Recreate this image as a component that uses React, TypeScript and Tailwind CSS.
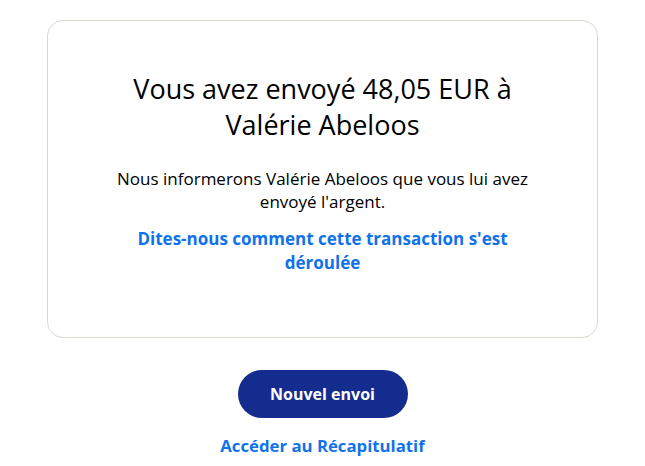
import React from "react";

export default function App() {
  return (
    <div
      className="w-[645px] h-[466px] bg-white flex flex-col items-center"
      style={{ fontFamily: "'Open Sans', sans-serif" }}
    >
      <div className="mt-[20px] w-[551px] h-[318px] border border-[#dcd9cf] rounded-[16px] flex flex-col items-center pt-[50px]">
        <h1 className="text-[27px] leading-[36px] text-black text-center max-w-[420px]">
          Vous avez envoyé 48,05 EUR à Valérie Abeloos
        </h1>
        <p className="mt-[24px] text-[17px] leading-[23px] text-black text-center max-w-[440px]">
          Nous informerons Valérie Abeloos que vous lui avez envoyé l'argent.
        </p>
        <a className="mt-[14px] text-[17px] leading-[24px] font-bold text-[#1072eb] text-center max-w-[400px]">
          Dites-nous comment cette transaction s'est déroulée
        </a>
      </div>
      <button className="mt-[32px] w-[170px] h-[48px] rounded-full bg-[#142c8e] text-white text-[16px] font-bold">
        Nouvel envoi
      </button>
      <a className="mt-[16px] text-[16.75px] leading-[24px] font-bold text-[#1072eb]">
        Accéder au Récapitulatif
      </a>
    </div>
  );
}
